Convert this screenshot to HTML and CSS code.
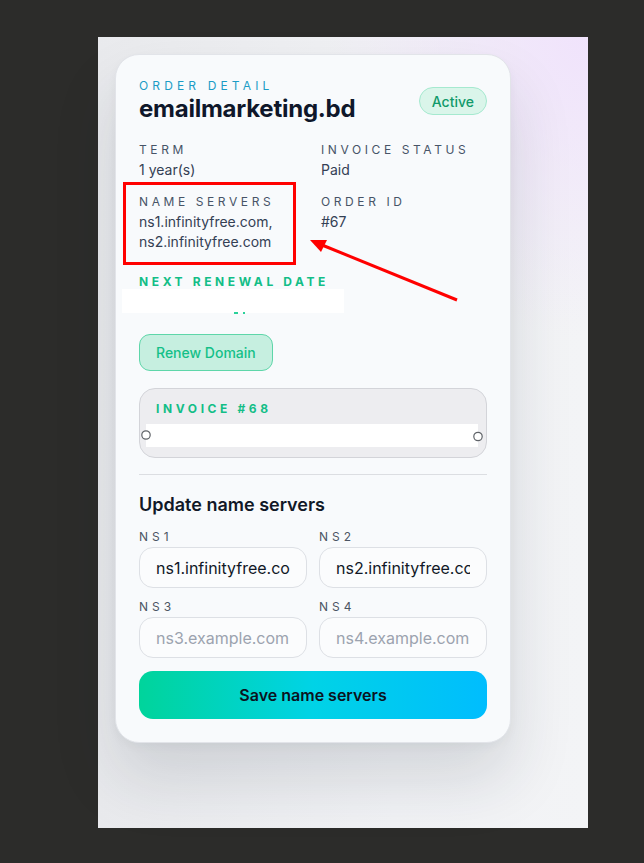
FILE: index.html
```html
<!DOCTYPE html>
<html lang="en">
<head>
<meta charset="utf-8">
<title>Order detail</title>
<link rel="stylesheet" href="styles.css">
</head>
<body>
<div class="panel">
  <div class="card">
    <div class="head">
      <div>
        <div class="eyebrow">Order detail</div>
        <h1 class="title">emailmarketing.bd</h1>
      </div>
      <span class="badge">Active</span>
    </div>

    <div class="facts">
      <div class="fact">
        <div class="label">Term</div>
        <div class="value">1 year(s)</div>
      </div>
      <div class="fact">
        <div class="label">Invoice status</div>
        <div class="value">Paid</div>
      </div>
      <div class="fact">
        <div class="label">Name servers</div>
        <div class="value">ns1.infinityfree.com,<br>ns2.infinityfree.com</div>
      </div>
      <div class="fact">
        <div class="label">Order ID</div>
        <div class="value">#67</div>
      </div>
      <div class="fact renewal">
        <div class="label green">Next renewal date</div>
        <div class="value green-value">&nbsp;</div>
      </div>
    </div>

    <button class="renew" type="button">Renew Domain</button>

    <div class="invoice">
      <div class="label green">Invoice #68</div>
      <div class="invoice-body"></div>
    </div>

    <hr class="divider">

    <h2 class="subhead">Update name servers</h2>
    <form class="ns-grid">
      <label class="field">
        <span class="ns-label">NS1</span>
        <input class="ns-input" type="text" value="ns1.infinityfree.com">
      </label>
      <label class="field">
        <span class="ns-label">NS2</span>
        <input class="ns-input" type="text" value="ns2.infinityfree.com">
      </label>
      <label class="field">
        <span class="ns-label">NS3</span>
        <input class="ns-input" type="text" placeholder="ns3.example.com">
      </label>
      <label class="field">
        <span class="ns-label">NS4</span>
        <input class="ns-input" type="text" placeholder="ns4.example.com">
      </label>
      <button class="save" type="button">Save name servers</button>
    </form>
  </div>
</div>

<div class="annot">
  <div class="redbox"></div>
  <div class="redact redact-date"></div>
  <div class="redact redact-invoice"></div>
  <svg class="overlay" width="644" height="863" viewBox="0 0 644 863">
    <rect x="234" y="312" width="4" height="2" fill="#2bd19a"/>
    <rect x="243" y="312" width="2" height="2" fill="#2bd19a"/>
    <line x1="457" y1="300" x2="322" y2="245" stroke="#ff0000" stroke-width="3"/>
    <polygon points="310,240 327,240 321,252" fill="#ff0000"/>
    <circle cx="146" cy="435" r="4.2" fill="#ffffff" stroke="#5f6368" stroke-width="1.2"/>
    <circle cx="478" cy="436.5" r="4.2" fill="#ffffff" stroke="#5f6368" stroke-width="1.2"/>
  </svg>
</div>
</body>
</html>
```

FILE: styles.css
```css
* { box-sizing: border-box; }

html, body {
  margin: 0;
  padding: 0;
}

body {
  background: #2c2c2a;
  font-family: Inter, "Noto Sans", "Liberation Sans", sans-serif;
  position: relative;
  width: 644px;
  height: 863px;
  overflow: hidden;
}

.panel {
  margin: 37px 0 0 98px;
  width: 490px;
  height: 791px;
  padding: 17px;
  background:
    radial-gradient(ellipse 260px 300px at 100% 0%, rgba(240, 226, 252, 0.95) 0%, rgba(240, 226, 252, 0) 100%),
    linear-gradient(90deg, #e9eaed 0%, #f1f2f5 60%, #f3f4f6 100%);
}

.card {
  width: 396px;
  background: #f8fafc;
  border: 1px solid #e2e4e9;
  border-radius: 24px;
  padding: 23px 23px 23px;
  box-shadow: 0 36px 64px rgba(30, 41, 59, 0.14), 0 4px 10px rgba(30, 41, 59, 0.04);
}

.head {
  display: flex;
  justify-content: space-between;
  align-items: center;
}

.eyebrow {
  font-size: 12px;
  line-height: 16px;
  letter-spacing: 0.345em;
  text-transform: uppercase;
  color: #1b9cc6;
}

.title {
  margin: 0;
  font-size: 24px;
  line-height: 30px;
  font-weight: 700;
  color: #0f172a;
  letter-spacing: -0.01em;
}

.badge {
  display: inline-flex;
  align-items: center;
  height: 28px;
  padding: 0 12px;
  border-radius: 999px;
  background: #daf5ea;
  border: 1px solid #a5e9cf;
  color: #119a6a;
  font-size: 14px;
  font-weight: 500;
}

.facts {
  display: grid;
  grid-template-columns: 166px 166px;
  column-gap: 16px;
  row-gap: 14px;
  margin-top: 18px;
}

.label {
  font-size: 12px;
  line-height: 16px;
  letter-spacing: 0.3em;
  text-transform: uppercase;
  color: #475467;
  white-space: nowrap;
}

.label.green {
  color: #13be87;
  font-weight: 700;
}

.value {
  margin-top: 2px;
  font-size: 14px;
  line-height: 20px;
  color: #344054;
}

.green-value {
  color: #13be87;
  font-weight: 600;
}

.renewal {
  grid-column: 1 / 3;
  margin-top: 8px;
}

.renew {
  display: block;
  margin-top: 22px;
  height: 37px;
  padding: 0 16px;
  border-radius: 11px;
  background: #c6efe0;
  border: 1px solid #5ed6a9;
  color: #14c088;
  font-family: inherit;
  font-size: 14px;
  font-weight: 500;
}

.invoice {
  margin-top: 17px;
  height: 70px;
  border-radius: 16px;
  background: #ededf0;
  border: 1px solid #d3d4d9;
  padding: 12px 16px 0;
}

.invoice-body {
  height: 23px;
  margin-top: 8px;
}

.divider {
  margin: 16px 0 0;
  border: 0;
  height: 1px;
  background: #dcdee2;
}

.subhead {
  margin: 18px 0 0;
  font-size: 18px;
  line-height: 24px;
  font-weight: 600;
  color: #111827;
}

.ns-grid {
  display: grid;
  grid-template-columns: 1fr 1fr;
  column-gap: 12px;
  row-gap: 11px;
  margin: 12px 0 0;
}

.field {
  display: flex;
  flex-direction: column;
  gap: 2px;
}

.ns-label {
  font-size: 12px;
  line-height: 16px;
  letter-spacing: 0.33em;
  color: #4b5563;
}

.ns-input {
  width: 100%;
  height: 41px;
  border: 1px solid #dde0e5;
  border-radius: 14px;
  background: #fbfcfd;
  padding: 0 16px;
  font-family: inherit;
  font-size: 16px;
  color: #111827;
  outline: none;
}

.ns-input::placeholder {
  color: #9ca3af;
}

.save {
  grid-column: 1 / 3;
  margin-top: 2px;
  height: 48px;
  border: 0;
  border-radius: 14px;
  background: linear-gradient(90deg, #00d49b 0%, #00d3e6 50%, #00bdfe 100%);
  color: #0b1220;
  font-family: inherit;
  font-size: 16px;
  font-weight: 600;
}

.annot {
  position: absolute;
  inset: 0;
  pointer-events: none;
}

.redbox {
  position: absolute;
  left: 123px;
  top: 182px;
  width: 173px;
  height: 83px;
  border: 3px solid #ff0000;
}

.redact {
  position: absolute;
  background: #ffffff;
}

.redact-date {
  left: 122px;
  top: 289px;
  width: 222px;
  height: 24px;
}

.redact-invoice {
  left: 146px;
  top: 424px;
  width: 332px;
  height: 23px;
}

.overlay {
  position: absolute;
  left: 0;
  top: 0;
}
```
